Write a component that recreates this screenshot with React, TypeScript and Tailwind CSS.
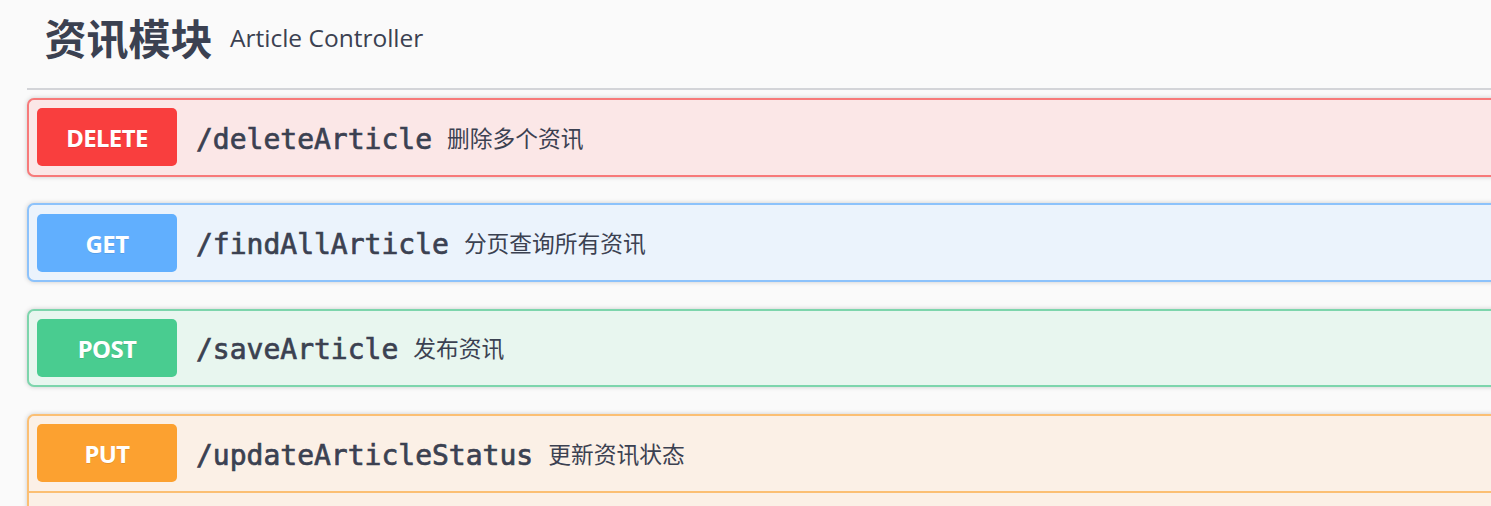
import React from "react";

type Op = {
  method: string;
  path: string;
  desc: string;
  badge: string;
  border: string;
  bg: string;
  open?: boolean;
};

const ops: Op[] = [
  {
    method: "DELETE",
    path: "/deleteArticle",
    desc: "删除多个资讯",
    badge: "bg-[#f93e3e]",
    border: "border-[#f77a7a]",
    bg: "bg-[#fbe7e7]",
  },
  {
    method: "GET",
    path: "/findAllArticle",
    desc: "分页查询所有资讯",
    badge: "bg-[#61affe]",
    border: "border-[#8cc2fb]",
    bg: "bg-[#ebf3fc]",
  },
  {
    method: "POST",
    path: "/saveArticle",
    desc: "发布资讯",
    badge: "bg-[#49cc90]",
    border: "border-[#7dd5ac]",
    bg: "bg-[#e8f6ef]",
  },
  {
    method: "PUT",
    path: "/updateArticleStatus",
    desc: "更新资讯状态",
    badge: "bg-[#fca130]",
    border: "border-[#fbbf73]",
    bg: "bg-[#fbf0e6]",
    open: true,
  },
];

const OpBlock = ({ op }: { op: Op }) => {
  return (
    <div
      className={`border-2 border-r-0 rounded-l-[7px] shadow-[0_0_5px_rgba(0,0,0,0.19)] ${op.border} ${op.bg}`}
    >
      <div
        className={`flex items-center px-[8px] ${
          op.open ? `border-b-2 ${op.border} h-[76.75px]` : "h-[74.75px]"
        }`}
      >
        <span
          className={`w-[140px] h-[58px] pt-[2px] rounded-[5px] flex items-center justify-center text-white text-[24px] font-bold tracking-[-0.6px] [text-shadow:0_1px_0_rgba(0,0,0,0.1)] ${op.badge}`}
          style={{ fontFamily: '"Noto Sans", "Open Sans", sans-serif' }}
        >
          {op.method}
        </span>
        <span
          className="pl-[19px] pr-[15px] pt-[5px] text-[28px] font-normal text-[#3b4151] [-webkit-text-stroke:0.7px_#3b4151]"
          style={{ fontFamily: '"DejaVu Sans Mono", "Liberation Mono", monospace' }}
        >
          {op.path}
        </span>
        <span
          className="pt-[3px] text-[22.75px] text-[#3b4151]"
          style={{ fontFamily: '"Noto Sans", "Noto Sans CJK SC", sans-serif' }}
        >
          {op.desc}
        </span>
      </div>
      {op.open && <div className="h-[200px]" />}
    </div>
  );
};

export default function App() {
  return (
    <div className="w-full h-[506px] overflow-hidden bg-[#fafafa]">
      <div className="w-[1520px] pl-[27px]">
        <div className="flex items-center h-[90px] pl-[17.5px] pb-[14px] border-b-2 border-[#d3d4d8]">
          <h4
            className="text-[42px] font-bold text-[#3b4151] leading-none"
            style={{ fontFamily: '"Noto Sans CJK SC", "Noto Sans", sans-serif' }}
          >
            资讯模块
          </h4>
          <small
            className="pl-[17.5px] pt-[2px] text-[24.5px] text-[#3b4151]"
            style={{ fontFamily: '"Open Sans", "Noto Sans", sans-serif' }}
          >
            Article Controller
          </small>
        </div>
        <div className="flex flex-col gap-[26.5px] mt-[8px]">
          {ops.map((op) => (
            <OpBlock key={op.path} op={op} />
          ))}
        </div>
      </div>
    </div>
  );
}
